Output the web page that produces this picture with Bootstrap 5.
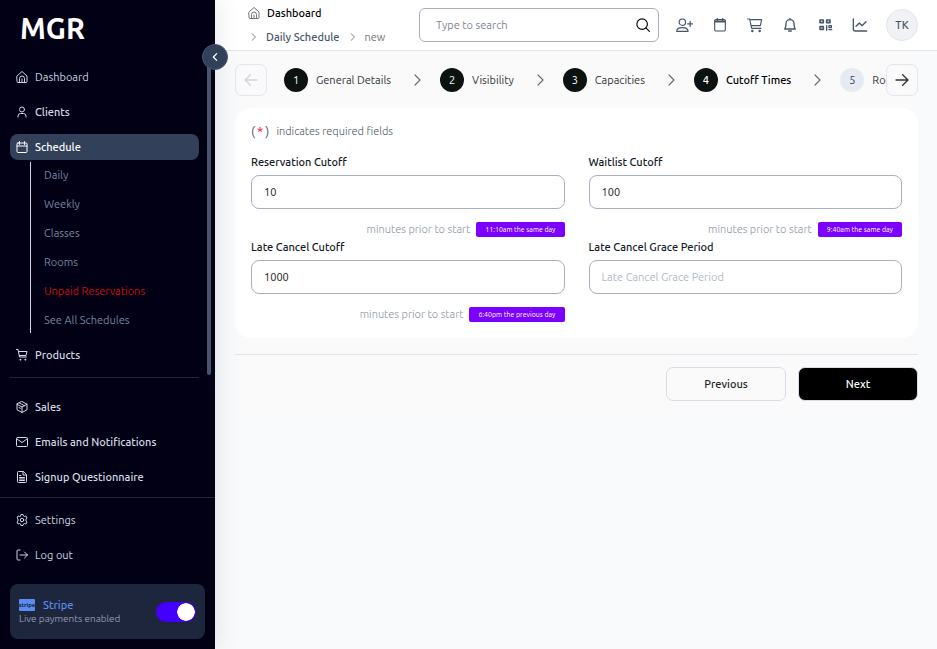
<!DOCTYPE html>
<html lang="en">
<head>
<meta charset="utf-8">
<meta name="viewport" content="width=device-width, initial-scale=1">
<title>Daily Schedule - Cutoff Times</title>
<link href="https://cdn.jsdelivr.net/npm/bootstrap@5.3.0/dist/css/bootstrap.min.css" rel="stylesheet">
<style>
body{font-family:Ubuntu,"Noto Sans",sans-serif;font-size:11px;line-height:16px;background:#f8fafc;color:#111827}
svg{fill:none;stroke:currentColor;stroke-width:2;stroke-linecap:round;stroke-linejoin:round;flex:none;display:block}
a{text-decoration:none;color:inherit}
.i12{width:12px;height:12px}.i14{width:14px;height:14px}.i16{width:16px;height:16px}
.side{width:215px;background:#020014;color:#cbd5e1;box-shadow:0 0 24px rgba(15,23,42,.12)}
.brand{height:64px;padding:6px 20px 0;font-size:29px;line-height:44px;font-weight:700;color:#fff}
.menu{padding:0 16px 7px 10px;border-bottom:1px solid #23263b;row-gap:9px}
.item{height:26px;padding:0 6px;gap:7px;border-radius:8px;font-weight:500;color:#d5dbe5}
.item.quiet{font-weight:400;color:#cbd5e1}
.item.current{background:#334059;color:#fff}
.subs{margin:-7px 0 0 20px;padding:0 0 0 13px;border-left:1px solid #cbd5e1;row-gap:3px;color:#7885a0}
.subs a{line-height:26px;display:block}
.subs .unpaid{color:#c80d12}
.rule{height:1px;margin-bottom:7px;background:#23263b}
.track{width:4px;height:325px;top:50px;right:4px;background:#475571;border-radius:2px}
.collapse-btn{width:26px;height:26px;top:44px;left:202px;background:#334059;color:#fff;border:1px solid #475571;border-radius:50%;z-index:5}
.foot{padding:9px 10px 10px;row-gap:9px}
.stripe-box{margin-top:7px;height:55px;padding:0 9px;background:#1e263d;border-radius:8px;color:#7885a0;font-size:10px;line-height:14px}
.stripe-live{font-weight:300;color:#a3adc0}
.stripe-box .mark-badge{width:16px;height:12px;background:#5b8def;color:#16213c;border-radius:1px;font-size:6px;line-height:11px;font-weight:700;display:flex;justify-content:center}
.stripe-box .title{font-size:11px;font-weight:500;color:#5b8def}
.form-switch .form-check-input.pay{width:40px;height:20px;margin:0;border:0;background-color:#4300ff;background-image:radial-gradient(circle closest-side,#fff 94%,transparent);background-size:18px 18px;background-position:left 1px center;box-shadow:none}
.form-switch .form-check-input.pay:checked{background-position:right 1px center}
.top{height:51px;background:#fff;border-bottom:1px solid #e2e5ea;padding:0 19px 0 33px}
.crumbs{width:171px;color:#475569;font-weight:500;row-gap:8px}
.crumbs .trail{gap:7px}
.search{width:240px;height:34px;border:1px solid #a9afbc;border-radius:6px;padding:0 8px 0 16px}
.search input{font-size:11px;color:#333;outline:0;min-width:0}
::placeholder{color:#7c8594;opacity:1}
.tools{margin-left:17px;gap:19px;color:#475569}
.tools svg{stroke-width:1.7}
.avatar{width:32px;height:32px;border-radius:50%;background:#f1f2f5;border:1px solid #e2e5ec;color:#475569;font-weight:500}
.work{margin:0 19px 0 20px;background:#fafafa;padding-bottom:12px}
.steps{height:57px}
.steprow{margin-left:17px;overflow:hidden;color:#30353b}
.arrow{width:32px;height:32px;border:1px solid #e2e6f0;border-radius:7px;background:#fafafa;color:#333}
.arrow:disabled{color:#d2d5d9}
.arrow svg{stroke-width:2}
.step{gap:8px}
.num{width:24px;height:24px;border-radius:50%;background:#0b120f;color:#fff;font-size:11px}
.num.todo{background:#e6eaf2;color:#374151}
.chev{margin:0 17px 0 20px;color:#64696f}
.panel{background:#fff;border-radius:16px;padding:15px 16px 16px}
.need{color:#4b5563;font-weight:300;gap:7px;margin-bottom:15px}
.need b{color:#4b5563;font-size:13px}.need i{color:#e60023;font-style:normal;margin:0 2px}
.panel label{display:block;font-weight:500;line-height:16px;margin-bottom:5px}
.panel .form-control{height:34px;border:1px solid #a9b0c0;border-radius:8px;padding:0 12px;font-size:11px;color:#222}
.panel .form-control::placeholder{color:#b2bac7}
.hint{height:16px;margin-top:12px;margin-bottom:2px;gap:6px;font-weight:300;color:#8b93a3}
.pill{background:#7b00ff;color:#fff;font-size:7px;font-weight:400;line-height:15px;padding:0 9px;border-radius:2px}
.actions{margin-top:16px;border-top:1px solid #e2e6ec;padding-top:12px;gap:12px}
.actions .btn{width:120px;height:34px;padding:0;font-size:11px;font-weight:500;border-radius:7px;border:1px solid #d7dce6}
.actions .btn-next{background:#000;color:#fff}
</style>
</head>
<body>
<svg class="d-none" xmlns="http://www.w3.org/2000/svg">
<symbol id="home" viewBox="0 0 24 24"><path d="M2 10 12 1l10 9v11a2 2 0 0 1-2 2H4a2 2 0 0 1-2-2zM7 23v-8a5 5 0 0 1 10 0v8M12 16v7"/></symbol>
<symbol id="cart" viewBox="0 0 24 24"><path d="M1 1h3l3 15h14M5 5h17l-2 8H7"/><circle cx="8.500" cy="21.500" r="1"/><circle cx="18.500" cy="21.500" r="1"/></symbol>
<symbol id="right" viewBox="0 0 12 12"><path d="m4 1 5 5-5 5" stroke-width="1.100"/></symbol>
</svg>
<div class="d-flex min-vh-100">
<aside class="side position-relative d-flex flex-column flex-shrink-0">
  <div class="brand">MGR</div>
  <nav class="menu d-flex flex-column" aria-label="Main">
    <a class="item quiet d-flex align-items-center" href="#"><svg class="i12"><use href="#home"/></svg>Dashboard</a>
    <a class="item d-flex align-items-center" href="#"><svg class="i12" viewBox="0 0 24 24"><circle cx="12" cy="7" r="5"/><path d="M4 22v-2a5 5 0 0 1 5-5h6a5 5 0 0 1 5 5v2"/></svg>Clients</a>
    <a class="item current d-flex align-items-center" href="#"><svg class="i12" viewBox="0 0 24 24"><rect x="2" y="4" width="20" height="19" rx="2"/><path d="M2 10h20M7 1v6M17 1v6"/></svg>Schedule</a>
    <div class="subs d-flex flex-column">
      <a href="#">Daily</a><a href="#">Weekly</a><a href="#">Classes</a><a href="#">Rooms</a><a class="unpaid" href="#">Unpaid Reservations</a><a href="#">See All Schedules</a>
    </div>
    <a class="item d-flex align-items-center" href="#"><svg class="i12"><use href="#cart"/></svg>Products</a>
    <div class="rule"></div>
    <a class="item d-flex align-items-center" href="#"><svg class="i12" viewBox="0 0 24 24"><path d="m12 1 10 5.500v11L12 23 2 17.500v-11zM2 6.500 12 12l10-5.500M12 12v11M7 4l10 5.500M6 13l3 1.700"/></svg>Sales</a>
    <a class="item d-flex align-items-center" href="#"><svg class="i12" viewBox="0 0 24 24"><rect x="1" y="3" width="22" height="18" rx="2"/><path d="m2 6 10 7 10-7"/></svg>Emails and Notifications</a>
    <a class="item d-flex align-items-center" href="#"><svg class="i12" viewBox="0 0 24 24"><path d="M14 1H5a2 2 0 0 0-2 2v18a2 2 0 0 0 2 2h14a2 2 0 0 0 2-2V8zM14 1v7h7M7 9h3M7 13h10M7 16h10M7 19h10"/></svg>Signup Questionnaire</a>
  </nav>
  <div class="foot d-flex flex-column">
    <a class="item quiet d-flex align-items-center" href="#"><svg class="i12" viewBox="0 0 24 24"><path d="m9 4 1-3h4l1 3 2 1 3-1 2 4-2 2v4l2 2-2 4-3-1-2 1-1 3h-4l-1-3-2-1-3 1-2-4 2-2v-4L2 8l2-4 3 1z"/><circle cx="12" cy="12" r="3.500"/></svg>Settings</a>
    <a class="item quiet d-flex align-items-center" href="#"><svg class="i12" viewBox="0 0 24 24"><path d="M8 2H4a2 2 0 0 0-2 2v16a2 2 0 0 0 2 2h4M8 12h15M17 6l6 6-6 6"/></svg>Log out</a>
    <div class="stripe-box d-flex align-items-center justify-content-between">
      <div><div class="d-flex align-items-center gap-1"><span class="mark-badge me-1" aria-hidden="true">stripe</span><label class="title" for="pay">Stripe</label></div><div class="stripe-live">Live payments enabled</div></div>
      <div class="form-switch d-flex p-0 m-0"><input class="form-check-input pay" type="checkbox" role="switch" id="pay" checked></div>
    </div>
  </div>
  <div class="track position-absolute"></div>
  <button type="button" class="collapse-btn position-absolute d-flex align-items-center justify-content-center p-0" aria-label="Collapse sidebar"><svg width="10" height="10" viewBox="0 0 12 12"><path d="M8 2 4 6l4 4" stroke-width="1.500"/></svg></button>
</aside>
<main class="flex-grow-1 overflow-hidden">
  <header class="top d-flex align-items-center">
    <nav class="crumbs d-flex flex-column flex-shrink-0" aria-label="Breadcrumb">
      <a class="trail d-flex align-items-center text-black" href="#"><svg class="i12 text-secondary"><use href="#home"/></svg>Dashboard</a>
      <div class="trail d-flex align-items-center"><svg width="11" height="8"><use href="#right"/></svg><a href="#">Daily Schedule</a><svg width="11" height="8"><use href="#right"/></svg><span class="fw-normal text-secondary">new</span></div>
    </nav>
    <div class="search d-flex align-items-center">
      <input class="border-0 bg-transparent flex-grow-1 p-0" type="search" placeholder="Type to search" aria-label="Type to search">
      <svg class="text-black" width="14" height="14" viewBox="0 0 24 24"><circle cx="10.500" cy="10.500" r="9"/><path d="m17 17 6 6"/></svg>
    </div>
    <div class="tools d-flex align-items-center">
      <svg width="17" height="16" viewBox="0 0 24 22"><circle cx="9" cy="7" r="4.500"/><path d="M1 20c0-7 16-7 16 0zM20 6v7M16.500 9.500h7"/></svg>
      <svg class="i16" viewBox="0 0 24 24"><rect x="4" y="4" width="16" height="17" rx="2"/><path d="M4 6h16M4 7.500h16M8 2v4M16 2v4"/></svg>
      <svg class="i16" viewBox="0 0 24 24"><path d="M1 3h3l3 14h14M5 4h17l-2 9H6"/><circle cx="8" cy="21" r="1"/><circle cx="19" cy="21" r="1"/></svg>
      <svg class="i16" viewBox="0 0 24 24"><path d="M4 18c2-3 2-5 2-8a6 6 0 0 1 12 0c0 3 0 5 2 8zM12 2v2M10 21h4" stroke-width="2"/></svg>
      <svg class="i16" viewBox="0 0 24 24" stroke-linecap="butt"><path d="M4.500 4.500h5v4h-5zM14.500 4.500h5v4h-5zM4.500 14.500h5v4h-5z" stroke-width="2.400"/><path d="M14.500 13v7M18 13v3h3.500v-3zM18 19h1.500M21 19h1" stroke-width="2"/></svg>
      <svg class="i16" viewBox="0 0 24 24"><path d="M2 3v15a3 3 0 0 0 3 3h17M6 14l5-5 4 4 6-6" stroke-width="2"/></svg>
    </div>
    <button type="button" class="avatar ms-auto p-0" aria-label="Account TK">TK</button>
  </header>
  <div class="work">
    <div class="steps d-flex align-items-center">
      <button type="button" class="arrow flex-shrink-0 d-flex align-items-center justify-content-center p-0" disabled aria-label="Previous steps"><svg class="i16" viewBox="0 0 24 24"><path d="M21 12H3M11 4l-8 8 8 8"/></svg></button>
      <div class="steprow d-flex align-items-center flex-grow-1 text-nowrap">
        <div class="step d-flex align-items-center"><span class="num d-flex align-items-center justify-content-center">1</span>General Details</div>
        <svg class="chev i12"><use href="#right"/></svg>
        <div class="step d-flex align-items-center"><span class="num d-flex align-items-center justify-content-center">2</span>Visibility</div>
        <svg class="chev i12"><use href="#right"/></svg>
        <div class="step d-flex align-items-center"><span class="num d-flex align-items-center justify-content-center">3</span>Capacities</div>
        <svg class="chev i12"><use href="#right"/></svg>
        <div class="step d-flex align-items-center fw-medium text-black" aria-current="step"><span class="num d-flex align-items-center justify-content-center">4</span>Cutoff Times</div>
        <svg class="chev i12"><use href="#right"/></svg>
        <div class="step d-flex align-items-center"><span class="num todo d-flex align-items-center justify-content-center">5</span>Rooms</div>
      </div>
      <button type="button" class="arrow flex-shrink-0 d-flex align-items-center justify-content-center p-0" aria-label="More steps"><svg class="i16" viewBox="0 0 24 24"><path d="M3 12h18M13 4l8 8-8 8"/></svg></button>
    </div>
    <form>
      <div class="panel">
        <div class="need d-flex align-items-center"><b>(<i>*</i>)</b>indicates required fields</div>
        <div class="row gx-4">
          <div class="col-6"><label for="f1">Reservation Cutoff</label><input class="form-control" id="f1" value="10">
            <div class="hint d-flex align-items-center justify-content-end">minutes prior to start<span class="pill">11:10am the same day</span></div></div>
          <div class="col-6"><label for="f2">Waitlist Cutoff</label><input class="form-control" id="f2" value="100">
            <div class="hint d-flex align-items-center justify-content-end">minutes prior to start<span class="pill">9:40am the same day</span></div></div>
          <div class="col-6"><label for="f3">Late Cancel Cutoff</label><input class="form-control" id="f3" value="1000">
            <div class="hint mb-0 d-flex align-items-center justify-content-end">minutes prior to start<span class="pill">6:40pm the previous day</span></div></div>
          <div class="col-6"><label for="f4">Late Cancel Grace Period</label><input class="form-control" id="f4" placeholder="Late Cancel Grace Period"></div>
        </div>
      </div>
      <div class="actions d-flex justify-content-end"><button type="button" class="btn">Previous</button><button type="button" class="btn btn-next">Next</button></div>
    </form>
  </div>
</main>
</div>
<script src="https://cdn.jsdelivr.net/npm/bootstrap@5.3.0/dist/js/bootstrap.bundle.min.js"></script>
</body>
</html>
